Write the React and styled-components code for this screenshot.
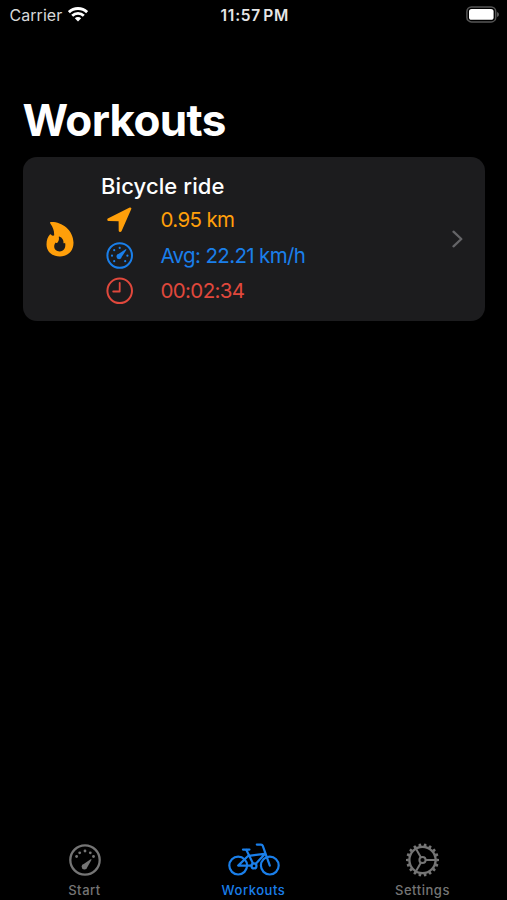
import React from 'react'
import styled, { createGlobalStyle } from 'styled-components'

const GlobalStyle = createGlobalStyle`
    body {
        margin: 0;
        background: #000;
    }
`

const colors = {
    orange: '#ff9f0a',
    blue: '#1a7fea',
    red: '#e0483c',
    gray: '#757575'
}

const Screen = styled.div`
    display: flex;
    flex-direction: column;
    width: 507px;
    height: 900px;
    overflow: hidden;
    background: #000;
    color: #fff;
    font-family: Inter, 'Liberation Sans', sans-serif;

    svg {
        display: block;
        flex: none;
    }
`

const StatusBar = styled.header`
    display: grid;
    grid-template-columns: 1fr auto 1fr;
    align-items: center;
    height: 29px;
    padding: 0 7px 0 9.5px;
    box-sizing: border-box;
`

const Carrier = styled.div`
    display: flex;
    align-items: center;
    gap: 5.5px;
    color: #d8d8d8;
    font-size: 16px;
    letter-spacing: 0.05px;
`

const Clock = styled.div`
    padding-top: 1px;
    color: #e6e6e6;
    font-size: 15.5px;
    font-weight: 600;
    letter-spacing: 0.75px;
    word-spacing: -2.5px;
`

const BatterySlot = styled.div`
    display: flex;
    justify-content: flex-end;
`

const Content = styled.main`
    flex: 1;
    padding: 63px 22px 0 22.5px;
`

const Title = styled.h1`
    margin: 0;
    height: 65px;
    font-size: 44px;
    line-height: 57px;
    font-weight: 700;
    letter-spacing: -0.65px;
`

const Card = styled.article`
    display: flex;
    align-items: center;
    height: 164px;
    padding: 0 21.5px 0 23px;
    box-sizing: border-box;
    border-radius: 14px;
    background: #1c1c1e;
`

const Details = styled.div`
    flex: 1;
    padding: 0 0 1px 27.5px;
`

const Activity = styled.h2`
    margin: 0;
    height: 34px;
    font-size: 22px;
    line-height: 36px;
    font-weight: 500;
    letter-spacing: 0.1px;
`

const Metric = styled.div`
    display: flex;
    align-items: center;
    height: 35.5px;
    padding-left: 4.5px;
    gap: 27px;
    color: ${props => props.$color};
    font-size: 20.5px;
    line-height: 24px;
    letter-spacing: -0.64px;
`

const TabBar = styled.nav`
    display: flex;
    height: 61px;
`

const Tab = styled.div`
    flex: 1;
    display: flex;
    flex-direction: column;
    align-items: center;
    color: ${props => props.$active ? colors.blue : colors.gray};
    font-size: 13px;
    line-height: 16px;
    font-weight: 500;
    letter-spacing: 0.55px;
`

const TabIcon = styled.div`
    display: flex;
    align-items: center;
    height: 42px;
    margin: 0 0 1px 0;
`

const WifiIcon = () => (
    <svg width="20" height="15" viewBox="0 0 20 15" fill="none" stroke="#fff" strokeWidth="2.8">
        <path d="M0.9 5.2a13 13 0 0 1 18.2 0" />
        <path d="M4.2 8.7a8.3 8.3 0 0 1 11.6 0" />
        <path d="M10 14.6 6.8 11.3a4.6 4.6 0 0 1 6.4 0Z" fill="#fff" stroke="none" />
    </svg>
)

const BatteryIcon = () => (
    <svg width="34" height="17" viewBox="0 0 34 17">
        <rect x="0.9" y="0.9" width="28.8" height="15" rx="4.5" fill="none" stroke="#555" strokeWidth="1.5" />
        <rect x="3" y="3" width="24.6" height="10.8" rx="2.6" fill="#fff" />
        <path d="M31 6v5c1.3-.5 2-1.3 2-2.5s-.7-2-2-2.5Z" fill="#555" />
    </svg>
)

const FlameIcon = () => (
    <svg width="28" height="36" viewBox="0 0 28 36">
        <path
            fill={colors.orange}
            d="M5 .9C15 .4 27.5 8.3 27.5 21.8c0 8.4-5.6 13.600-13.600 13.600C5.700 35.400.5 30.300.5 23.400c0-4 1.200-7.500 3.400-9.900.5-.5 1-.3 1.300.3.500.8 1.500 1.200 2.900.8C8.400 10.500 7.400 6.400 4.300 2.400 3.700 1.500 4 1 5 .9Z"
        />
        <path
            fill="#1c1c1e"
            d="M13.200 15.600c3.200 1 4.600 3.900 4.300 6.600.7.100 1.200-.1 1.600-.5 1.100 5.100-1.400 8.700-5.500 8.700-3.200 0-5.400-2-5.400-4.900 0-1.600.6-3 1.600-4 .3.400.7.700 1.300.6 1.500-1.700 2.300-3.800 1.700-5.800-.1-.5 0-.8.4-.7Z"
        />
    </svg>
)

const LocationIcon = () => (
    <svg width="28" height="28" viewBox="0 0 28 28">
        <path
            fill="currentColor"
            d="M23.700 1.600c1.100-.5 2 .4 1.600 1.500L15.500 25.200c-.7 1.300-2.800.9-2.800-.7L12.600 15.200 3 15.100c-1.800 0-2.400-2.100-.7-2.900Z"
        />
    </svg>
)

const SpeedIcon = () => (
    <svg width="28" height="28" viewBox="0 0 28 28">
        <circle cx="13.700" cy="13.500" r="12.300" fill="none" stroke="currentColor" strokeWidth="2" />
        <g fill="currentColor">
            <circle cx="6" cy="13.700" r="1.100" />
            <circle cx="8.200" cy="8.200" r="1.100" />
            <circle cx="13.700" cy="5.900" r="1.100" />
            <circle cx="21.400" cy="13.700" r="1.100" />
            <circle cx="8.200" cy="19.200" r="1.100" />
            <circle cx="19.200" cy="19.200" r="1.100" />
            <path d="M19.600 7.300c.6-.3 1 .1.700.7l-4.500 6.800a2.700 2.700 0 1 1-3-3Z" />
        </g>
    </svg>
)

const TimeIcon = () => (
    <svg width="28" height="28" viewBox="0 0 28 28" fill="none" stroke="currentColor" strokeLinecap="round" strokeLinejoin="round">
        <circle cx="13.700" cy="13.800" r="12.300" strokeWidth="2" />
        <path d="M13.700 5.800V14.500H7.200" strokeWidth="1.800" />
    </svg>
)

const ChevronIcon = () => (
    <svg width="12" height="18" viewBox="0 0 12 18" fill="none" stroke="#646467" strokeWidth="2.300" strokeLinecap="round" strokeLinejoin="round">
        <path d="M1.500 1.700 9.300 9 1.500 16.300" />
    </svg>
)

const GaugeIcon = () => (
    <svg width="34" height="34" viewBox="0 0 34 34">
        <circle cx="17" cy="17" r="14.700" fill="none" stroke="currentColor" strokeWidth="2.300" />
        <g fill="currentColor">
            <circle cx="8.600" cy="13.500" r="1.400" />
            <circle cx="11.700" cy="9.800" r="1.400" />
            <circle cx="17" cy="8" r="1.400" />
            <circle cx="22.300" cy="9.800" r="1.400" />
            <circle cx="25.500" cy="13.500" r="1.400" />
            <path d="M22.600 16.300c.6-.4 1.200.1.800.8l-4.100 7.100a2.900 2.900 0 1 1-3.200-3.500Z" />
        </g>
    </svg>
)

const BikeIcon = () => (
    <svg width="52" height="34" viewBox="0 0 52 34" fill="none" stroke="currentColor" strokeWidth="2.200" strokeLinecap="round" strokeLinejoin="round">
        <circle cx="10.200" cy="22.600" r="8.900" />
        <circle cx="41.800" cy="22.600" r="8.900" />
        <path d="M15 6.600h6.400" strokeWidth="2.300" />
        <path d="M18.400 7 25 20.500M20.300 12.800 10.200 22.600H23.500M21 12.900 36.300 10.800M36.200 11.800 27.600 21" />
        <path d="M28.800 1.600H33c1 0 1.500.4 1.800 1.300L41.800 22.600" />
        <circle cx="26" cy="22.900" r="2.500" />
    </svg>
)

const TEETH = Array.from({ length: 18 }, (_, i) => i * 20 + 10)

const GearIcon = () => (
    <svg width="34" height="34" viewBox="0 0 34 34" fill="none" stroke="currentColor">
        <circle cx="16.500" cy="17" r="13.100" strokeWidth="2.300" />
        <circle cx="16.500" cy="17" r="3.100" strokeWidth="2" />
        {[0, 120, 240].map(a => (
            <path key={a} d="M19.800 17H29" strokeWidth="2" transform={`rotate(${a} 16.5 17)`} />
        ))}
        {TEETH.map(a => (
            <path key={a} d="M14.900 3.300 15.400.5h2.200L18.100 3.300Z" fill="currentColor" stroke="none" transform={`rotate(${a} 16.5 17)`} />
        ))}
    </svg>
)

const App = () => (
    <Screen>
        <GlobalStyle />
        <StatusBar>
            <Carrier>Carrier <WifiIcon /></Carrier>
            <Clock>11:57 PM</Clock>
            <BatterySlot><BatteryIcon /></BatterySlot>
        </StatusBar>

        <Content>
            <Title>Workouts</Title>
            <Card>
                <FlameIcon />
                <Details>
                    <Activity>Bicycle ride</Activity>
                    <Metric $color={colors.orange}><LocationIcon />0.95 km</Metric>
                    <Metric $color={colors.blue}><SpeedIcon />Avg: 22.21 km/h</Metric>
                    <Metric $color={colors.red}><TimeIcon />00:02:34</Metric>
                </Details>
                <ChevronIcon />
            </Card>
        </Content>

        <TabBar>
            <Tab><TabIcon><GaugeIcon /></TabIcon>Start</Tab>
            <Tab $active><TabIcon><BikeIcon /></TabIcon>Workouts</Tab>
            <Tab><TabIcon><GearIcon /></TabIcon>Settings</Tab>
        </TabBar>
    </Screen>
)

export default App
